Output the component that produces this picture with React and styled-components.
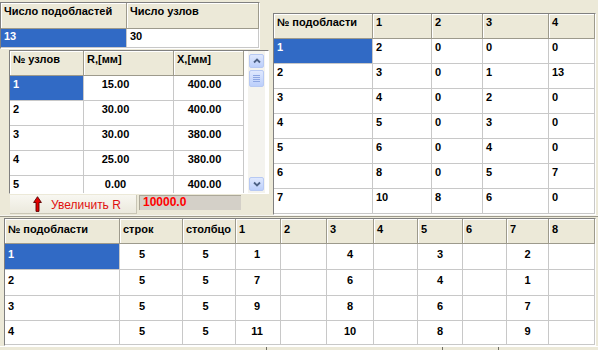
import styled, { createGlobalStyle } from "styled-components";

const GlobalStyle = createGlobalStyle`
  html, body { margin: 0; padding: 0; background: #ece9d8; }
  body { font-family: "Liberation Sans", Arial, sans-serif; }
`;

const Screen = styled.div`
  width: 598px;
  height: 350px;
  overflow: hidden;
  background: #ece9d8;
  display: flex;
  flex-direction: column;
`;

const TopArea = styled.div`
  display: flex;
  height: 215px;
  flex-shrink: 0;
`;

const LeftPane = styled.div`
  width: 270px;
  flex-shrink: 0;
  display: flex;
  flex-direction: column;
`;

const RightPane = styled.div`
  flex: 1;
  padding: 13px 0 0 3px;
`;

const Frame = styled.div`
  box-sizing: border-box;
  width: ${(p) => p.$w}px;
  height: ${(p) => p.$h}px;
  margin: ${(p) => p.$m || "0"};
  border: 1px solid;
  border-color: #808080 #ffffff #ffffff #808080;
  background: #fff;
  overflow: hidden;
  display: flex;
  flex-shrink: 0;
`;

const Grid = styled.div`
  display: grid;
  grid-template-columns: ${(p) => p.$cols};
  grid-template-rows: ${(p) => p.$rows};
  grid-auto-rows: 25px;
  flex-shrink: 0;
  align-self: flex-start;
`;

const Cell = styled.div`
  box-sizing: border-box;
  overflow: hidden;
  white-space: nowrap;
  display: flex;
  align-items: flex-start;
  justify-content: ${(p) => (p.$center ? "center" : "flex-start")};
  padding: ${(p) => p.$pt}px ${(p) => p.$pr || 0}px 0 3px;
  font-size: 11px;
  line-height: 13px;
  font-weight: bold;
  border-right: 1px solid #c8c8c8;
  border-bottom: 1px solid #c8c8c8;
  background: ${(p) => (p.$sel ? "#316ac5" : "#fff")};
  color: ${(p) => (p.$sel ? "#fff" : "#000")};
`;

const HeadCell = styled(Cell)`
  background: #ece9d8;
  color: #000;
  border-right-color: #9d9a8c;
  border-bottom-color: #9d9a8c;
  box-shadow: inset 1px 1px 0 #fff;
`;

const Filler = styled.div`
  flex: 1;
  background: #fff;
`;

const ScrollTrack = styled.div`
  box-sizing: border-box;
  width: 17px;
  margin-right: 3px;
  padding: 3px 1px 2px;
  background: #f4f3ee;
  display: flex;
  flex-direction: column;
  gap: 2px;
`;

const ScrollBtn = styled.div`
  box-sizing: border-box;
  height: ${(p) => p.$h}px;
  border: 1px solid #b7c9f3;
  border-radius: 2px;
  background: linear-gradient(#dfe8fe, #bccffb);
  display: flex;
  flex-direction: column;
  align-items: center;
  justify-content: center;
  gap: 1px;
`;

const Grip = styled.div`
  width: 7px;
  height: 1px;
  background: #8da6e2;
`;

const Spacer = styled.div`
  flex: 1;
`;

const ActionRow = styled.div`
  display: flex;
  gap: 2px;
  padding-left: 10px;
  height: 19px;
  margin-top: 1px;
`;

const ActionButton = styled.div`
  box-sizing: border-box;
  width: 127px;
  height: 19px;
  display: flex;
  align-items: flex-end;
  gap: 9px;
  padding: 0 0 1px 23px;
  background: linear-gradient(#f8f7f1, #ebe9dd);
  border-right: 1px solid #c9c6b6;
  border-bottom: 1px solid #c9c6b6;
  font-size: 12px;
  line-height: 14px;
  color: #e01010;
`;

const ValueBox = styled.div`
  box-sizing: border-box;
  width: 102px;
  height: 15px;
  padding: 0 0 0 3px;
  background: #d4d0c8;
  border-top: 1px solid #aca899;
  border-left: 1px solid #aca899;
  font-size: 12px;
  line-height: 13px;
  font-weight: bold;
  color: #ff0000;
`;

const Splitter = styled.div`
  height: 2px;
  flex-shrink: 0;
  border-top: 1px solid #f6f5ef;
  border-bottom: 1px solid #9d9a8c;
  box-sizing: content-box;
  height: 0;
  margin-bottom: 1px;
`;

const Footer = styled.div`
  display: flex;
  height: 4px;
  overflow: hidden;
  border-top: 1px solid #fff;
  flex-shrink: 0;
`;

const FooterCell = styled.div`
  width: ${(p) => p.$w}px;
  flex-shrink: 0;
  border-right: 1px solid #716f64;
  padding: 2px 0 0 8px;
  box-sizing: border-box;
  font-size: 11px;
  line-height: 13px;
  font-weight: bold;
  color: #000;
  white-space: nowrap;
`;

const Chevron = ({ down }) => (
  <svg width="8" height="6" viewBox="0 0 8 6">
    <path
      d={down ? "M1 1.5 L4 4.5 L7 1.5" : "M1 4.5 L4 1.5 L7 4.5"}
      fill="none"
      stroke="#4d6185"
      strokeWidth="1.8"
    />
  </svg>
);

const UpArrow = () => (
  <svg width="9" height="16" viewBox="0 0 9 16" style={{ marginBottom: 0 }}>
    <path
      d="M4.5 0.7 L8.4 6.5 L6 6.5 L6 15.4 L3 15.4 L3 6.5 L0.6 6.5 Z"
      fill="#e30000"
      stroke="#5a0000"
      strokeWidth="0.9"
    />
  </svg>
);

const DataGrid = ({ cols, rows, head, data, sel = 0, center = [], pr = [], pt = 2, dataPt }) => (
  <Grid $cols={cols.map((c) => c + "px").join(" ")} $rows={rows}>
    {head.map((h, i) => (
      <HeadCell key={"h" + i} $pt={pt}>
        {h}
      </HeadCell>
    ))}
    {data.map((row, r) =>
      row.map((v, c) => (
        <Cell
          key={r + "-" + c}
          $pt={dataPt ?? pt}
          $sel={r === sel && c === 0}
          $center={center[c]}
          $pr={pr[c]}
        >
          {v}
        </Cell>
      ))
    )}
  </Grid>
);

const nodes = [
  ["1", "15.00", "400.00"],
  ["2", "30.00", "400.00"],
  ["3", "30.00", "380.00"],
  ["4", "25.00", "380.00"],
  ["5", "0.00", "400.00"],
];

const links = [
  ["1", "2", "0", "0", "0"],
  ["2", "3", "0", "1", "13"],
  ["3", "4", "0", "2", "0"],
  ["4", "5", "0", "3", "0"],
  ["5", "6", "0", "4", "0"],
  ["6", "8", "0", "5", "7"],
  ["7", "10", "8", "6", "0"],
];

const matrix = [
  ["1", "5", "5", "1", "", "4", "", "3", "", "2", ""],
  ["2", "5", "5", "7", "", "6", "", "4", "", "1", ""],
  ["3", "5", "5", "9", "", "8", "", "6", "", "7", ""],
  ["4", "5", "5", "11", "", "10", "", "8", "", "9", ""],
];

const App = () => (
  <>
    <GlobalStyle />
    <Screen>
      <TopArea>
        <LeftPane>
          <Frame $w={260} $h={47} $m="2px 0 0 0">
            <DataGrid
              cols={[126, 132]}
              rows="26px 19px"
              head={["Число подобластей", "Число узлов"]}
              data={[["13", "30"]]}
              dataPt={1}
            />
          </Frame>
          <Frame $w={260} $h={144} $m="1px 0 0 9px">
            <DataGrid
              cols={[74, 90, 70]}
              rows="25px"
              head={["№ узлов", "R,[мм]", "X,[мм]"]}
              data={nodes}
              center={[false, true, true]}
              pr={[0, 29, 11]}
            />
            <Filler />
            <ScrollTrack>
              <ScrollBtn $h={14}>
                <Chevron />
              </ScrollBtn>
              <ScrollBtn $h={17}>
                <Grip />
                <Grip />
                <Grip />
                <Grip />
              </ScrollBtn>
              <Spacer />
              <ScrollBtn $h={14}>
                <Chevron down />
              </ScrollBtn>
            </ScrollTrack>
          </Frame>
          <ActionRow>
            <ActionButton>
              <UpArrow />
              <span>Увеличить R</span>
            </ActionButton>
            <ValueBox>10000.0</ValueBox>
          </ActionRow>
        </LeftPane>
        <RightPane>
          <Frame $w={323} $h={202}>
            <DataGrid
              cols={[99, 59, 51, 66, 46]}
              rows="25px"
              head={["№ подобласти", "1", "2", "3", "4"]}
              data={links}
            />
          </Frame>
        </RightPane>
      </TopArea>
      <Splitter />
      <Frame $w={592} $h={128} $m="0 0 0 4px">
        <DataGrid
          cols={[115, 63, 53, 45, 46, 47, 44, 45, 44, 42, 46]}
          rows="25px 26px 26px 25px 24px"
          head={["№ подобласти", "строк", "столбцо", "1", "2", "3", "4", "5", "6", "7", "8"]}
          data={matrix}
          center={[false, true, true, true, true, true, true, true, true, true, true]}
          pr={[0, 21, 10, 5, 3, 3, 3, 3, 3, 3, 3]}
          pt={4}
        />
      </Frame>
      <Footer>
        <FooterCell $w={267}>Число областей</FooterCell>
        <FooterCell $w={176}>Узлы</FooterCell>
        <FooterCell $w={56}> </FooterCell>
      </Footer>
    </Screen>
  </>
);

export default App;
